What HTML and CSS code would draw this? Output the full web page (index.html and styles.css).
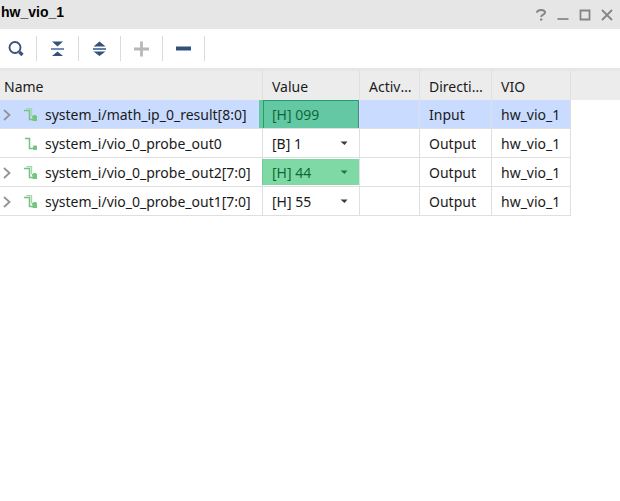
FILE: index.html
```html
<!DOCTYPE html>
<html lang="en">
<head>
<meta charset="utf-8">
<title>hw_vio_1</title>
<link rel="stylesheet" href="styles.css">
</head>
<body>
<svg class="defs" aria-hidden="true">
  <symbol id="wire" viewBox="0 0 14 14"><path d="M1 1.5H5.5V11.5H9" fill="none" stroke="#74c184" stroke-width="1.5"/><rect x="9" y="8.5" width="4" height="4.5" rx="1" fill="#74c67c"/></symbol>
  <symbol id="bus" viewBox="0 0 14 14"><path d="M2.5 .5H7.5V8" fill="none" stroke="#a3d7ae" stroke-width="1.4"/><path d="M0 2.5H5.5V11.5H9" fill="none" stroke="#74c184" stroke-width="1.5"/><path d="M7.5 8.5L10 7H12L13 8.5V13H8.5V10Z" fill="#74c67c"/></symbol>
  <symbol id="chevron" viewBox="0 0 8 12"><path d="M1 1L6.5 6L1 11" fill="none" stroke="#949494" stroke-width="1.8"/></symbol>
  <symbol id="arrow" viewBox="0 0 8 6"><path d="M.5 .5H7.5L4.5 4Z" fill="currentColor"/></symbol>
</svg>
<header class="titlebar">
  <h1>hw_vio_1</h1>
  <div class="window-controls">
    <button aria-label="Help"><svg width="12" height="12" viewBox="0 0 12 12"><path d="M2 3.8Q2.2 1 6 1Q10 1 10 3.6Q10 5 7.8 5.8Q6.2 6.5 6.2 8" fill="none" stroke="#858585" stroke-width="2"/><path d="M5 9.5H7.4V11.5H5Z" fill="#858585"/></svg></button>
    <button aria-label="Minimize"><svg width="12" height="12" viewBox="0 0 12 12"><path d="M.5 10H11.5" stroke="#929292" stroke-width="2"/></svg></button>
    <button aria-label="Maximize"><svg width="12" height="12" viewBox="0 0 12 12"><path d="M1.5 1.5H10.5V10.5H1.5Z" fill="none" stroke="#858585" stroke-width="1.8"/></svg></button>
    <button aria-label="Close"><svg width="12" height="12" viewBox="0 0 12 12"><path d="M1 1L11 11M11 1L1 11" stroke="#858585" stroke-width="1.8"/></svg></button>
  </div>
</header>
<div class="toolbar" role="toolbar" aria-label="Probe tools">
  <button aria-label="Search"><svg width="16" height="16" viewBox="0 0 16 16"><circle cx="7" cy="6.5" r="5.5" fill="none" stroke="#3b527f" stroke-width="1.9"/><path d="M11.5 11L14.5 14" stroke="#3b527f" stroke-width="3.2"/></svg></button>
  <button aria-label="Collapse all"><svg width="16" height="16" viewBox="0 0 16 16"><path d="M2 .5H13L7.5 5.5ZM7.5 10.5L13 15H2Z" fill="#34507f"/><path d="M1 8H14" stroke="#547397" stroke-width="1.6"/></svg></button>
  <button aria-label="Expand all"><svg width="16" height="16" viewBox="0 0 16 16"><path d="M1.5 5.5L7.5 .5L13.5 5.5ZM1.5 10.5H13.5L7.5 15Z" fill="#34507f"/><path d="M1 8H14" stroke="#547397" stroke-width="1.8"/></svg></button>
  <button aria-label="Add probe" disabled><svg width="16" height="16" viewBox="0 0 16 16"><path d="M0 8H15M7.5 .5V15.5" stroke="#b8b8b8" stroke-width="2.8"/></svg></button>
  <button aria-label="Remove probe"><svg width="16" height="16" viewBox="0 0 16 16"><path d="M0 7.5H15" stroke="#334f7e" stroke-width="4"/></svg></button>
</div>
<table class="probes">
  <colgroup><col class="c-name"><col class="c-value"><col class="c-activity"><col class="c-direction"><col class="c-vio"><col></colgroup>
  <thead>
    <tr><th>Name</th><th>Value</th><th>Activity</th><th>Direction</th><th>VIO</th><td></td></tr>
  </thead>
  <tbody>
    <tr class="selected">
      <td><div class="name"><button aria-label="Expand"><svg width="8" height="12"><use href="#chevron"/></svg></button><svg width="14" height="14"><use href="#bus"/></svg><span>system_i/math_ip_0_result[8:0]</span></div></td>
      <td class="mark mark-wide">[H] 099</td><td></td><td>Input</td><td>hw_vio_1</td>
    </tr>
    <tr>
      <td><div class="name"><i></i><svg width="14" height="14"><use href="#wire"/></svg><span>system_i/vio_0_probe_out0</span></div></td>
      <td><div class="value"><select aria-label="Value of system_i/vio_0_probe_out0"><option>[B] 1</option></select><svg width="8" height="6"><use href="#arrow"/></svg></div></td><td></td><td>Output</td><td>hw_vio_1</td>
    </tr>
    <tr>
      <td><div class="name"><button aria-label="Expand"><svg width="8" height="12"><use href="#chevron"/></svg></button><svg width="14" height="14"><use href="#bus"/></svg><span>system_i/vio_0_probe_out2[7:0]</span></div></td>
      <td class="mark"><div class="value"><select aria-label="Value of system_i/vio_0_probe_out2[7:0]"><option>[H] 44</option></select><svg width="8" height="6"><use href="#arrow"/></svg></div></td><td></td><td>Output</td><td>hw_vio_1</td>
    </tr>
    <tr>
      <td><div class="name"><button aria-label="Expand"><svg width="8" height="12"><use href="#chevron"/></svg></button><svg width="14" height="14"><use href="#bus"/></svg><span>system_i/vio_0_probe_out1[7:0]</span></div></td>
      <td><div class="value"><select aria-label="Value of system_i/vio_0_probe_out1[7:0]"><option>[H] 55</option></select><svg width="8" height="6"><use href="#arrow"/></svg></div></td><td></td><td>Output</td><td>hw_vio_1</td>
    </tr>
  </tbody>
</table>
</body>
</html>
```
FILE: styles.css
```css
* { box-sizing: border-box; }
body {
  margin: 0;
  background: #fff;
  color: #1a1a1a;
  font: 14px/20px "Noto Sans", sans-serif;
}
.defs { position: absolute; width: 0; height: 0; }
button {
  display: flex;
  align-items: center;
  justify-content: center;
  padding: 0;
  border: 0;
  background: none;
}
svg { display: block; flex: none; }
.titlebar {
  display: flex;
  justify-content: space-between;
  height: 29px;
  padding: 0 2px 0 1px;
  background: #e6e6e6;
}
h1 {
  margin: 0;
  padding-top: 2px;
  color: #000;
  font: bold 14px/20px "Liberation Sans", Arial, sans-serif;
}
.window-controls { display: flex; }
.window-controls button { width: 22px; }
.toolbar {
  display: flex;
  align-items: center;
  height: 42px;
  padding-right: 8px;
  border-bottom: 3px solid #e6e6e6;
}
.toolbar button {
  width: 42px;
  height: 25px;
  border-right: 1px solid #dadada;
}
.toolbar button:first-child { width: 37px; padding-right: 5px; }
.probes {
  width: 100%;
  table-layout: fixed;
  border-collapse: separate;
  border-spacing: 0;
}
.c-name { width: 263px; }
.c-value { width: 97px; }
.c-activity { width: 60px; }
.c-direction { width: 72px; }
.c-vio { width: 79px; }
th, td {
  height: 29px;
  padding: 2px 0 0 9px;
  border-right: 1px solid #dfdfdf;
  text-align: left;
  font-weight: normal;
  white-space: nowrap;
}
thead th, thead td { background: #ececec; }
th { overflow: hidden; padding-right: 6px; text-overflow: ellipsis; }
th:first-child { padding-left: 4px; }
thead td { border-right: 0; }
tbody td { border-bottom: 1px solid #dfdfdf; }
tbody td:first-child { padding-left: 3px; }
.selected td { background: #c9dcff; }
.name { display: flex; align-items: center; }
.name button, .name i { width: 8px; margin-right: 13px; }
.name span { margin-left: 7px; }
.value { display: grid; align-items: center; }
.value select, .value svg { grid-area: 1 / 1; }
.value select {
  appearance: none;
  width: 100%;
  padding: 0;
  border: 0;
  background: none;
  color: inherit;
  font: inherit;
}
.value svg { justify-self: end; margin-right: 11px; color: #3a3a3a; pointer-events: none; }
.mark { position: relative; }
.mark::after {
  content: "";
  position: absolute;
  inset: 1px 0 1px -1px;
  background: rgba(0, 180, 75, .5);
  pointer-events: none;
}
.mark-wide::after { inset: 0 1px 0 -4px; }
.mark-wide { box-shadow: inset 1px 1px #3f86a0, inset -1px 0 #3f86a0; }
```
